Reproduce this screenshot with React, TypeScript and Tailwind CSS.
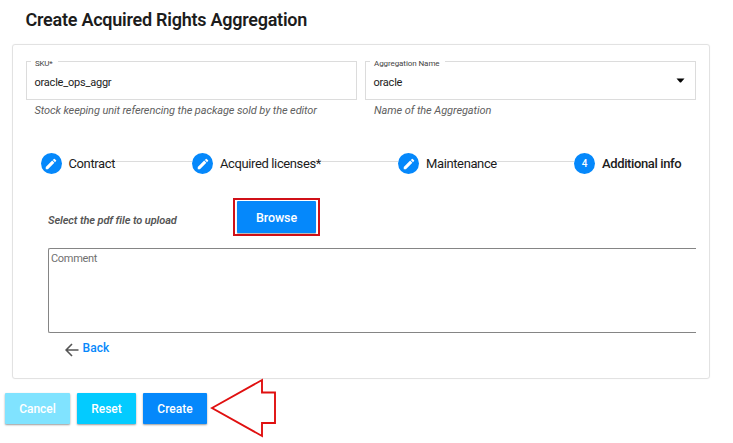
import type { ReactNode } from 'react';

function Field({ label, labelClass, value, hint, hintClass, children }: {
  label: string;
  labelClass: string;
  value: string;
  hint: string;
  hintClass: string;
  children?: ReactNode;
}) {
  return (
    <div className="w-[331px]">
      <div className="relative flex h-[39px] items-center justify-between border border-[#dcdcdc] pt-[5px] pr-[10px] pl-[7.500px]">
        <span className={`absolute -top-[2px] left-[4px] h-[8px] bg-white pl-[4px] text-[8px] leading-[8px] whitespace-nowrap text-[#444] ${labelClass}`}>
          {label}
        </span>
        <span className="text-[11px] leading-[14px] tracking-[-0.22px] text-[#1c1c1c]">{value}</span>
        {children}
      </div>
      <p className={`mt-[4px] text-[11px] leading-[14px] text-[#606060] italic ${hintClass}`}>{hint}</p>
    </div>
  );
}

function Badge({ children }: { children: ReactNode }) {
  return (
    <span className="flex size-[21px] shrink-0 items-center justify-center rounded-full bg-[#0588fb] text-[10px] font-medium text-white">
      {children}
    </span>
  );
}

function Pencil() {
  return (
    <svg className="size-[14px]" viewBox="0 0 24 24" fill="currentColor">
      <path d="M3 17.25V21h3.75L17.81 9.94l-3.75-3.75L3 17.25zM20.71 7.04a1 1 0 0 0 0-1.41l-2.34-2.34a1 1 0 0 0-1.41 0l-1.83 1.83 3.75 3.75 1.83-1.83z" />
    </svg>
  );
}

const stepText = 'ml-[7px] shrink-0 whitespace-nowrap text-[13px] leading-[16px] tracking-[-0.38px] text-[#1c1c1c]';
const line = 'mb-[4px] h-px flex-1 bg-[#dcdcdc]';
const action = 'flex h-[31px] items-center justify-center rounded-[1px] pt-[1px] text-[12px] font-medium text-white shadow-[0_1px_2px_rgba(0,0,0,0.4)]';

export default function App() {
  return (
    <div className="h-[443px] w-[733px] overflow-hidden bg-white font-[Roboto,sans-serif]">
      <h1 className="pt-[9px] pl-[25.500px] text-[18px] leading-[22px] font-semibold tracking-[-0.25px] whitespace-nowrap text-[#1c1c1c]">
        Create Acquired Rights Aggregation
      </h1>
      <main className="mt-[13px] ml-[12px] h-[335px] w-[698px] rounded-[3px] border border-[#e2e2e2] pt-[16px] pl-[13px] shadow-[0_0_1px_#e8e8e8]">
        <div className="flex gap-[8px]">
          <Field label="SKU*" labelClass="w-[27px] tracking-[-0.2px]" value="oracle_ops_aggr" hint="Stock keeping unit referencing the package sold by the editor" hintClass="pl-[8.500px] tracking-[-0.1px]" />
          <Field label="Aggregation Name" labelClass="w-[75px] tracking-[-0.08px]" value="oracle" hint="Name of the Aggregation" hintClass="pl-[9px] tracking-[-0.09px]">
            <svg className="mb-[6px] h-[5px] w-[9px]" viewBox="0 0 9 5"><path d="M0.500 0.500h8L5 4.500H4z" fill="#050505" /></svg>
          </Field>
        </div>

        <div className="mt-[35px] ml-[14.500px] flex h-[21px] w-[641px] items-center">
          <div className="flex w-[151.500px] shrink-0 items-center"><Badge><Pencil /></Badge><span className={stepText}>Contract</span><i className={line} /></div>
          <div className="flex w-[206px] shrink-0 items-center"><Badge><Pencil /></Badge><span className={stepText}>Acquired licenses*</span><i className={line} /></div>
          <div className="flex w-[176px] shrink-0 items-center"><Badge><Pencil /></Badge><span className={stepText}>Maintenance</span><i className={line} /></div>
          <div className="flex shrink-0 items-center"><Badge>4</Badge><span className={`${stepText} font-medium`}>Additional info</span></div>
        </div>

        <div className="mt-[24px] flex h-[38px] items-center">
          <span className="w-[207px] pt-[7px] pl-[22px] text-[11px] leading-[14px] font-semibold tracking-[-0.1px] whitespace-nowrap text-[#555] italic">
            Select the pdf file to upload
          </span>
          <div className="h-[38px] w-[87px] border-2 border-[#d01018] px-[2px] pt-[1px]">
            <div className="flex h-[32px] w-[79px] items-center justify-center rounded-[1px] bg-[#0588fb] pt-[2px] text-[12.500px] font-medium tracking-[-0.1px] text-white shadow-[0_1px_1px_rgba(0,0,0,0.3)]">
              Browse
            </div>
          </div>
        </div>

        <div className="mt-[12px] ml-[22px] h-[85px] w-[648px] rounded-l-[2px] border border-r-0 border-[#858585] pt-[3px] pl-[2px] text-[11px] leading-[14px] tracking-[-0.3px] text-[#707070]">
          Comment
        </div>

        <div className="mt-[8px] ml-[38.500px] flex h-[16px] items-start">
          <svg className="mt-[2px] h-[14px] w-[14px]" viewBox="0 0 14 14" fill="none" stroke="#555" strokeWidth="1.600">
            <path d="M13.500 7H1.200M7 1L1.100 7L7 13" />
          </svg>
          <span className="ml-[4px] text-[12px] leading-[14px] font-medium tracking-[0.1px] text-[#0588fb]">Back</span>
        </div>
      </main>

      <div className="mt-[14px] ml-[5px] flex">
        <div className={`${action} w-[65px] bg-[#80e3ff]`}>Cancel</div>
        <div className={`${action} ml-[7px] w-[59px] bg-[#03cbff]`}>Reset</div>
        <div className={`${action} ml-[7px] w-[64px] bg-[#0588fb]`}>Create</div>
        <svg className="-mt-[15px] ml-[3px] -mb-[20px] h-[60px] w-[70px]" viewBox="210 378 70 60" fill="none" stroke="#e01010" strokeWidth="1.900">
          <path d="M212 408L262 380V392.500H275V423H262V436Z" />
        </svg>
      </div>
    </div>
  );
}
